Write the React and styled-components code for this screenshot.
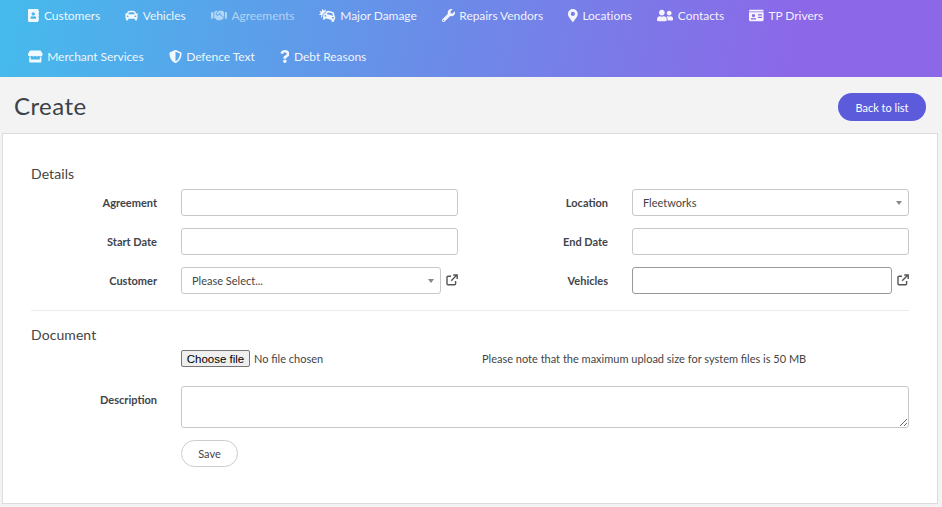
import React from 'react';
import styled, { createGlobalStyle } from 'styled-components';
import { FaAddressBook, FaCar, FaHandshake, FaCarCrash, FaWrench, FaMapMarkerAlt, FaUserFriends, FaIdCard, FaStore, FaShieldAlt, FaQuestion } from 'react-icons/fa';

const Global = createGlobalStyle`
  html, body { margin: 0; padding: 0; background: #f3f3f3; }
  body { font-family: Lato, "Liberation Sans", sans-serif; font-size: 12px; color: #333; overflow: hidden; }
  * { box-sizing: border-box; }
`;
const Page = styled.div`width: 942px; height: 507px; overflow: hidden;`;
const Nav = styled.nav`
  height: 77px;
  padding-left: 15.5px;
  background: linear-gradient(100deg, #45bbec 0%, #6e88e8 50%, #8c67e8 85%, #8c67e8 100%);
  display: flex; flex-wrap: wrap; align-content: flex-start;
`;
const NavItem = styled.a`
  height: 41px; padding: 0 12.5px;
  display: flex; align-items: center; gap: 4.6px;
  font-size: 12px; letter-spacing: -.05px;
  color: ${p => p.$dim ? 'rgba(255,255,255,.55)' : 'rgba(255,255,255,.92)'};
  white-space: nowrap;
  margin-top: -5px;
  & svg { height: 13px; width: ${p => p.$w}px; flex: none; }
`;
const Break = styled.div`flex-basis: 100%; height: 5px;`;
const Header = styled.header`
  height: 56px; padding: 0 16px 0 14px;
  display: flex; align-items: center; justify-content: space-between;
`;
const Title = styled.h1`margin: 0; font-size: 24px; font-weight: 400; color: #3c4249; letter-spacing: .45px;`;
const BackButton = styled.button`
  width: 88px; height: 28px; border: 0; border-radius: 14px; margin-top: 4px;
  background: #5b5bdc; color: #fff; font: 11px Lato, sans-serif; padding: 0;
`;
const Card = styled.main`
  margin: 0 4px 0 2px; height: 371px;
  background: #fff; border: 1px solid #dcdcdc;
  padding: 31px 28px 0 28px;
`;
const SectionTitle = styled.h2`
  margin: 0; font-size: 14px; line-height: 17px; font-weight: 400; color: #444; letter-spacing: .08px;
`;
const FormGrid = styled.div`
  display: grid; grid-template-columns: 427px 427px; column-gap: 24px; row-gap: 12px;
  margin-top: 7px;
`;
const Field = styled.div`display: flex; align-items: center; height: 27px;`;
const Label = styled.label`
  width: 126px; margin-right: 24px; flex: none; text-align: right;
  font-size: 11px; font-weight: 700; color: #3f444a;
`;
const Input = styled.div`
  flex: 1; height: 27px; min-width: 0;
  border: 1px solid ${p => p.$dark ? '#999' : '#c8c8c8'}; border-radius: 3px; background: #fff;
`;
const Select = styled(Input)`
  position: relative; display: flex; align-items: center; padding-left: 10px;
  font-size: 11px; color: #444;
  &::after {
    content: ''; position: absolute; right: 6px; top: 11px;
    border-left: 3.5px solid transparent; border-right: 3.5px solid transparent;
    border-top: 4px solid #888;
  }
`;
const Ext = styled.svg`width: 12px; height: 12px; margin-left: 5px; margin-top: -2px; flex: none; color: #555;`;
const ExtIcon = () => (
  <Ext viewBox="0 0 12 12" fill="none" stroke="currentColor" strokeWidth="1.4">
    <path d="M5 2.2H2a1 1 0 0 0-1 1v6.6a1 1 0 0 0 1 1h6.6a1 1 0 0 0 1-1V7" />
    <path d="M5.2 6.8L10.4 1.6M7.2 1h4v4" />
  </Ext>
);
const Divider = styled.hr`margin: 16px 0 0; border: 0; border-top: 1px solid #ececec;`;
const DocTitle = styled(SectionTitle)`margin-top: 15px;`;
const DocRow = styled.div`
  display: grid; grid-template-columns: 427px 427px; column-gap: 24px; margin-top: 7px; align-items: center; height: 17px;
`;
const FileWrap = styled.div`display: flex; align-items: center; margin-left: 150px; font-size: 11px; color: #444;`;
const FileButton = styled.button`
  width: 69px; height: 17px; padding: 0; margin-right: 4px;
  border: 1px solid #767676; border-radius: 2px; background: #efefef; color: #000;
  font: 11.5px "Liberation Sans", Arial, sans-serif;
`;
const Note = styled.span`font-size: 11px; color: #444;`;
const DescField = styled.div`display: flex; margin-top: 19px;`;
const DescLabel = styled(Label)`padding-top: 7px;`;
const TextArea = styled.textarea`
  flex: 1; height: 42px; min-width: 0; border: 1px solid #c8c8c8; border-radius: 3px; display: block; padding: 0; outline: none;
`;
const SaveButton = styled.button`
  display: block; margin: 12px 0 0 150px; width: 57px; height: 27px; padding: 0;
  border: 1px solid #ccc; border-radius: 14px; background: #fff; color: #444;
  font: 11px Lato, sans-serif;
`;

export default function App() {
  return (
    <Page>
      <Global />
      <Nav>
        <NavItem $w={11.4}><FaAddressBook />Customers</NavItem>
        <NavItem $w={13}><FaCar />Vehicles</NavItem>
        <NavItem $w={16.25} $dim><FaHandshake />Agreements</NavItem>
        <NavItem $w={16.25}><FaCarCrash />Major Damage</NavItem>
        <NavItem $w={13}><FaWrench />Repairs Vendors</NavItem>
        <NavItem $w={9.75}><FaMapMarkerAlt />Locations</NavItem>
        <NavItem $w={16.25}><FaUserFriends />Contacts</NavItem>
        <NavItem $w={14.6}><FaIdCard />TP Drivers</NavItem>
        <Break />
        <NavItem $w={14.6}><FaStore />Merchant Services</NavItem>
        <NavItem $w={13}><FaShieldAlt />Defence Text</NavItem>
        <NavItem $w={9.75}><FaQuestion />Debt Reasons</NavItem>
      </Nav>
      <Header>
        <Title>Create</Title>
        <BackButton>Back to list</BackButton>
      </Header>
      <Card>
        <SectionTitle>Details</SectionTitle>
        <FormGrid>
          <Field><Label>Agreement</Label><Input /></Field>
          <Field><Label>Location</Label><Select>Fleetworks</Select></Field>
          <Field><Label>Start Date</Label><Input /></Field>
          <Field><Label>End Date</Label><Input /></Field>
          <Field><Label>Customer</Label><Select>Please Select...</Select><ExtIcon /></Field>
          <Field><Label>Vehicles</Label><Input $dark /><ExtIcon /></Field>
        </FormGrid>
        <Divider />
        <DocTitle>Document</DocTitle>
        <DocRow>
          <FileWrap><FileButton>Choose file</FileButton>No file chosen</FileWrap>
          <Note>Please note that the maximum upload size for system files is 50 MB</Note>
        </DocRow>
        <DescField><DescLabel>Description</DescLabel><TextArea /></DescField>
        <SaveButton>Save</SaveButton>
      </Card>
    </Page>
  );
}
